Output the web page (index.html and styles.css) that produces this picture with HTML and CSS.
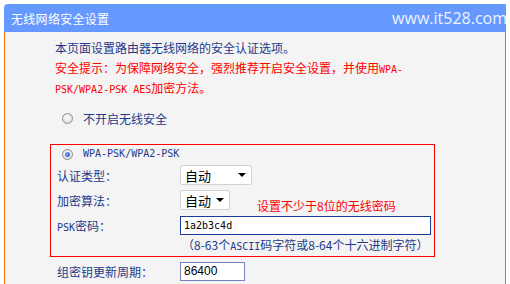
FILE: index.html
```html
<!DOCTYPE html>
<html lang="zh-CN">
<head>
    <meta charset="UTF-8">
    <title>无线网络安全设置</title>
    <link rel="stylesheet" href="styles.css">
</head>
<body>
    <div class="panel">
        <div class="header">
            <span class="title">无线网络安全设置</span>
            <span class="mark">www.it528.com</span>
        </div>
        <div class="content">
            <p class="intro">本页面设置路由器无线网络的安全认证选项。</p>
            <p class="warn">安全提示：为保障网络安全，强烈推荐开启安全设置，并使用<span class="mono">WPA-</span></p>
            <p class="warn"><span class="mono">PSK/WPA2-PSK AES</span>加密方法。</p>

            <label class="radio-row off">
                <input type="radio" name="sec" value="none">
                <span>不开启无线安全</span>
            </label>

            <div class="box">
                <label class="radio-row">
                    <input type="radio" name="sec" value="wpa" checked>
                    <span class="mono">WPA-PSK/WPA2-PSK</span>
                </label>
                <div class="row">
                    <span class="label">认证类型：</span>
                    <div class="select wide"><span>自动</span><svg width="8" height="4" viewBox="0 0 8 4"><path d="M0 0h8L4 4z" fill="#000"/></svg></div>
                </div>
                <div class="row">
                    <span class="label">加密算法：</span>
                    <div class="select"><span>自动</span><svg width="8" height="4" viewBox="0 0 8 4"><path d="M0 0h8L4 4z" fill="#000"/></svg></div>
                </div>
                <div class="row psk">
                    <span class="label"><span class="mono">PSK</span>密码：</span>
                    <div class="field">
                        <span class="tip">设置不少于8位的无线密码</span>
                        <input class="text pass" type="text" value="1a2b3c4d">
                    </div>
                </div>
                <div class="row hint">
                    <span class="label"></span>
                    <span class="hint-text">（8-63个<span class="mono">ASCII</span>码字符或8-64个十六进制字符）</span>
                </div>
            </div>

            <div class="row group">
                <span class="label">组密钥更新周期：</span>
                <input class="text period" type="text" value="86400">
            </div>
        </div>
    </div>
</body>
</html>
```

FILE: styles.css
```css
body {
    margin: 0;
    font-family: "Noto Sans CJK SC", "DejaVu Sans", sans-serif;
    font-size: 12px;
    background: #fff;
}
.panel {
    margin: 4px 0 0 4px;
    width: 502px;
}
.header {
    height: 28px;
    background: #6699ff;
    border-top-left-radius: 4px;
    display: flex;
    justify-content: space-between;
    align-items: center;
    padding-left: 7px;
    color: #fff;
}
.title {
    font-size: 12px;
    letter-spacing: 0.3px;
}
.mark {
    font-family: "Open Sans", sans-serif;
    font-size: 16px;
    color: #eef3ff;
    margin-right: -1px;
}
.content {
    background: #f4f4f4;
    border-left: 1px solid #f07010;
    border-right: 1px solid #f07010;
    padding: 6px 0 4px 50px;
    height: 252px;
    box-sizing: border-box;
    color: #1e3a8a;
    overflow: hidden;
}
p {
    margin: 0;
    line-height: 20px;
    height: 20px;
}
.warn {
    color: #ff0000;
}
.mono {
    font-family: "DejaVu Sans Mono", monospace;
    font-size: 10px;
    line-height: 1;
}
.radio-row {
    display: flex;
    align-items: center;
    gap: 10px;
    height: 20px;
}
.radio-row.off {
    margin: 10px 0 0 7px;
}
.radio-row input {
    appearance: none;
    margin: 0;
    width: 11px;
    height: 11px;
    border: 1px solid #8c8c8c;
    border-radius: 50%;
    background: radial-gradient(circle at 50% 40%, #ffffff, #d4d4d4);
    box-sizing: border-box;
    display: grid;
    place-items: center;
}
.radio-row input:checked::after {
    content: "";
    width: 5px;
    height: 5px;
    border-radius: 50%;
    background: radial-gradient(circle at 40% 40%, #6fa6ff, #1a4fb8);
}
.box {
    margin: 16px 0 0 -5px;
    width: 385px;
    border: 1px solid #ff0000;
    padding: 0 6px 3px 6px;
    box-sizing: border-box;
    display: flex;
    flex-direction: column;
    gap: 2px;
}
.box .radio-row {
    height: 18px;
    margin-left: 5px;
}
.row {
    display: flex;
    align-items: center;
    height: 20px;
}
.box .row + .row {
    margin-top: 3px;
}
.label {
    width: 123px;
    flex: none;
    white-space: nowrap;
}
.select {
    width: 50px;
    height: 20px;
    box-sizing: border-box;
    border: 1px solid #d2d2d2;
    border-radius: 2px;
    background: #fff;
    color: #000;
    font-size: 13px;
    display: flex;
    align-items: center;
    justify-content: space-between;
    padding: 0 5px 0 4px;
}
.select.wide {
    width: 72px;
}
.field {
    display: flex;
    flex-direction: column;
}
.row.psk {
    margin-top: 5px;
}
.tip {
    color: #ff0000;
    font-size: 12px;
    line-height: 14px;
    margin: -17px 0 3px 77px;
    white-space: nowrap;
}
.text {
    height: 19px;
    box-sizing: border-box;
    border: 1px solid #1a3a9a;
    background: #fff;
    margin: 0;
    padding: 0 3px;
    color: #000;
    outline: none;
}
.pass {
    width: 251px;
    font-family: "DejaVu Sans Mono", monospace;
    font-size: 10px;
}
.box .row.hint {
    height: 18px;
    margin-top: -2px;
}
.hint-text {
    margin-left: 2px;
    white-space: nowrap;
}
.row.group {
    margin: 4px 0 0 2px;
}
.period {
    width: 65px;
    border-color: #7882c0;
    font-family: "Liberation Sans", sans-serif;
    font-size: 12px;
}
```
